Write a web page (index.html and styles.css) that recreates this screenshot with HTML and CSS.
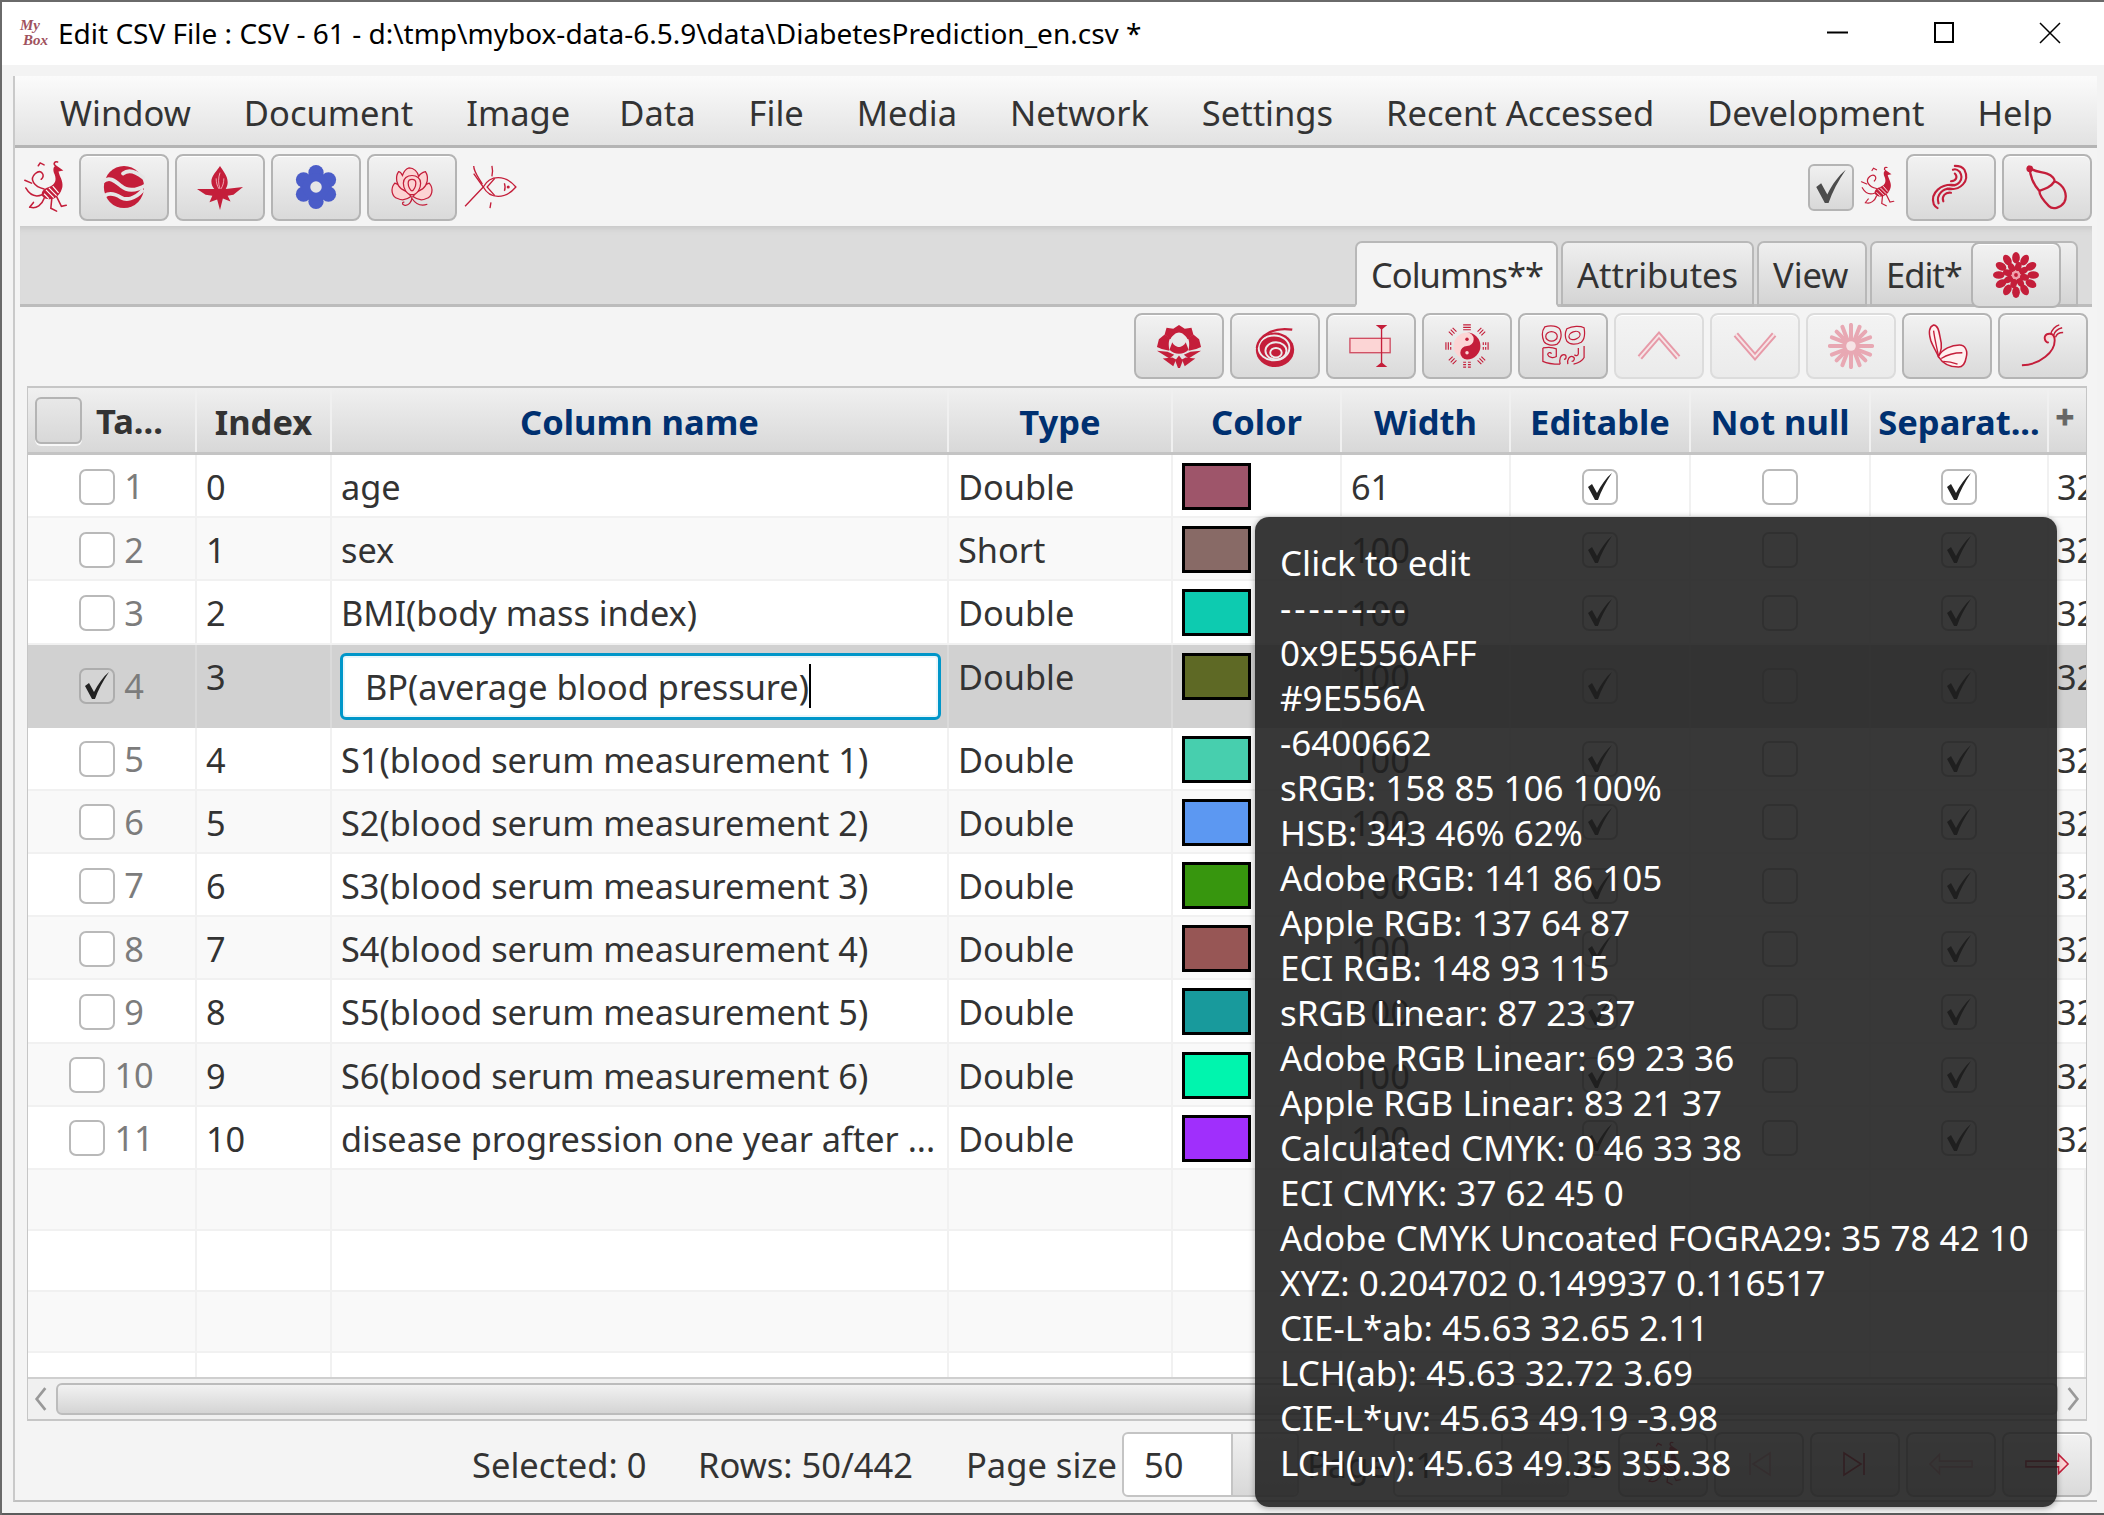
FILE: index.html
```html
<!DOCTYPE html>
<html lang="en">
<head>
    <meta charset="UTF-8">
    <title>Edit CSV File</title>
    <link rel="stylesheet" href="styles.css">
</head>
<body>

    <!-- Icon sprite -->
    <svg class="sprite" xmlns="http://www.w3.org/2000/svg">
        <symbol id="i-phoenix" viewBox="0 0 48 56">
            <g fill="none" stroke="#c41e3a" stroke-width="1.6" stroke-linecap="round">
                <path d="M22 30C12 28 6 20 13 14c6-5 11 2 6 6"/>
                <path d="M20 36c-7 3-13 0-17-7"/>
                <path d="M22 40c-2 6-8 11-14 9"/>
                <path d="M9 24 2 21"/>
                <path d="M30 40l-1 10 6 3"/>
                <path d="M35 38l5 10 5-1"/>
                <path d="M34 6c-3-2-1-5 2-4"/>
                <path d="M16 6l2-3 4 2"/>
                <path d="M11 44l-4 5"/>
            </g>
            <path fill="#c41e3a" d="M35 6c-4 0-4 5-2 9 2 6 1 10-6 13-8 2-10 9-4 12 9 3 16-3 18-12 1-6-3-11-4-16l5-1z"/>
            <g fill="none" stroke="#fff" stroke-width="1.2">
                <path d="M24 31l8 8"/>
                <path d="M27 29l8 8"/>
                <path d="M31 27l6 7"/>
                <path d="M22 35l5 5"/>
            </g>
        </symbol>
        <symbol id="i-swirl" viewBox="0 0 48 48">
            <ellipse cx="24" cy="24" rx="21" ry="22" fill="#c41e3a"/>
            <g fill="none" stroke="#e6e6e6" stroke-width="4" stroke-linecap="round">
                <path d="M1 19C9 12 15 18 21 23s14 6 26-1"/>
                <path d="M4 33c6-4 12-1 17 2s14 2 22-7"/>
                <path d="M23 10c5-4 12-3 21 4"/>
            </g>
        </symbol>
        <symbol id="i-flame" viewBox="0 0 48 48">
            <path fill="#c41e3a" d="M24 2c3 5 8 10 8 17 0 3-1 5-2 7l18-2-10 8-6 1 3 6-8-3-3 12-3-11-8 3 3-7-7-1L0 26l18 0c-2-2-3-5-3-8 0-6 6-11 9-16z"/>
            <path fill="none" stroke="#f4a8b4" stroke-width="1" d="M24 9c-2 6-2 11 0 17M20 15c0 4 1 8 3 11M28 15c0 4-1 8-3 11"/>
        </symbol>
        <symbol id="i-gear" viewBox="0 0 48 48">
            <g fill="#4a5cc8">
                <circle cx="24" cy="9" r="8"/>
                <circle cx="24" cy="39" r="8"/>
                <circle cx="11" cy="16.500" r="8"/>
                <circle cx="37" cy="16.500" r="8"/>
                <circle cx="11" cy="31.500" r="8"/>
                <circle cx="37" cy="31.500" r="8"/>
                <circle cx="24" cy="24" r="14"/>
            </g>
            <circle cx="24" cy="24" r="6" fill="#e6e6e6"/>
        </symbol>
        <symbol id="i-peony" viewBox="0 0 48 48">
            <g fill="#fcd3d3" stroke="#c41e3a" stroke-width="1.3">
                <path d="M6 20c-5 6-3 14 3 16 6 3 10 1 14-2-4-6-10-12-17-14z"/>
                <path d="M42 20c5 6 3 14-3 16-6 3-10 1-14-2 4-6 10-12 17-14z"/>
                <path d="M10 8c-4 6-2 14 3 18l11 6 11-6c5-4 7-12 3-18-4 1-6 3-7 5-1-5-5-9-10-9-4 1-6 5-7 8-1-2-3-4-4-4z"/>
                <path d="M15 20c0-5 4-8 9-8s9 3 9 8-3 12-9 12-9-7-9-12z"/>
                <path d="M20 20c0-3 2-4 4-4s4 1 4 4-2 8-4 8-4-5-4-8z"/>
            </g>
            <path fill="none" stroke="#c41e3a" stroke-width="1.3" d="M24 34c0 6-4 10-8 9-3-1-2-4 0-3M24 36c4 6 10 8 16 6"/>
        </symbol>
        <symbol id="i-fish" viewBox="0 0 56 48">
            <g fill="none" stroke="#c41e3a" stroke-width="1.4">
                <path d="M21 24C28 11 44 11 55 24 44 37 28 37 21 24z"/>
                <path d="M33 15l-8 9 8 9"/>
                <path d="M21 24 11 10M21 24 2 44"/>
                <path d="M11 2c0 6 5 12 9 19M29 40l-1 6M30 2c1 4 1 7 0 11"/>
                <path d="M43 20c1 3 1 6 0 8"/>
            </g>
            <circle cx="47" cy="24" r="1.6" fill="#c41e3a"/>
        </symbol>
        <symbol id="i-feather" viewBox="0 0 48 48">
            <g fill="none" stroke="#c41e3a" stroke-width="2.200" stroke-linecap="round">
                <path d="M20 26C34 28 44 18 38 6 36 3 32 2 28 2"/>
                <path d="M22 22C32 24 38 16 33 8c-2-2-5-3-7-2"/>
                <path d="M24 18c6 0 7-5 4-8"/>
                <path d="M28 22C14 20 2 30 6 42c1 2 2 3 4 4"/>
                <path d="M26 26C16 24 8 32 11 41"/>
                <path d="M24 30c-6-1-10 4-8 9"/>
            </g>
        </symbol>
        <symbol id="i-gourd" viewBox="0 0 48 48">
            <g fill="none" stroke="#c41e3a" stroke-width="2.400">
                <path d="M6 4c4 4 12 4 18 6 6 2 8 6 8 8 10 4 14 14 10 22-4 6-12 8-16 4-6-6-10-12-10-16C10 22 6 12 6 4z"/>
                <path d="M16 28c6-2 12-4 16-10"/>
            </g>
            <circle cx="6" cy="5" r="3.500" fill="#c41e3a"/>
        </symbol>
        <symbol id="i-chrys" viewBox="0 0 48 48">
            <g fill="#c41e3a">
                <ellipse cx="24" cy="6" rx="4" ry="6"/>
                <ellipse cx="24" cy="6" rx="4" ry="6" transform="rotate(30 24 24)"/>
                <ellipse cx="24" cy="6" rx="4" ry="6" transform="rotate(60 24 24)"/>
                <ellipse cx="24" cy="6" rx="4" ry="6" transform="rotate(90 24 24)"/>
                <ellipse cx="24" cy="6" rx="4" ry="6" transform="rotate(120 24 24)"/>
                <ellipse cx="24" cy="6" rx="4" ry="6" transform="rotate(150 24 24)"/>
                <ellipse cx="24" cy="6" rx="4" ry="6" transform="rotate(180 24 24)"/>
                <ellipse cx="24" cy="6" rx="4" ry="6" transform="rotate(210 24 24)"/>
                <ellipse cx="24" cy="6" rx="4" ry="6" transform="rotate(240 24 24)"/>
                <ellipse cx="24" cy="6" rx="4" ry="6" transform="rotate(270 24 24)"/>
                <ellipse cx="24" cy="6" rx="4" ry="6" transform="rotate(300 24 24)"/>
                <ellipse cx="24" cy="6" rx="4" ry="6" transform="rotate(330 24 24)"/>
                <ellipse cx="24" cy="15" rx="3.4" ry="5" transform="rotate(15 24 24)"/>
                <ellipse cx="24" cy="15" rx="3.4" ry="5" transform="rotate(60 24 24)"/>
                <ellipse cx="24" cy="15" rx="3.4" ry="5" transform="rotate(105 24 24)"/>
                <ellipse cx="24" cy="15" rx="3.4" ry="5" transform="rotate(150 24 24)"/>
                <ellipse cx="24" cy="15" rx="3.4" ry="5" transform="rotate(195 24 24)"/>
                <ellipse cx="24" cy="15" rx="3.4" ry="5" transform="rotate(240 24 24)"/>
                <ellipse cx="24" cy="15" rx="3.4" ry="5" transform="rotate(285 24 24)"/>
                <ellipse cx="24" cy="15" rx="3.4" ry="5" transform="rotate(330 24 24)"/>
            </g>
            <circle cx="24" cy="24" r="4.5" fill="#f0a0ac"/>
            <circle cx="24" cy="24" r="2" fill="#c41e3a"/>
        </symbol>
        <symbol id="i-lotus" viewBox="0 0 48 48">
            <g fill="#c41e3a">
                <path d="M24 2l-6 4-7-1-2 7 6 5c2-4 6-7 9-7s7 3 9 7l6-5-2-7-7 1z"/>
                <path d="M9 12l-6 5-2 8 5 2 8 2c-1-6-1-11 1-13z"/>
                <path d="M39 12l6 5 2 8-5 2-8 2c1-6 1-11-1-13z"/>
                <path d="M17 20c1 3 5 5 7 5s6-2 7-5l3 8c-3 3-6 4-10 4s-7-1-10-4z"/>
                <path d="M1 29l11 1 7 3-5 4z"/>
                <path d="M47 29l-11 1-7 3 5 4z"/>
                <path d="M7 37l10-1 4 2-3 7z"/>
                <path d="M41 37l-10-1-4 2 3 7z"/>
                <path d="M24 34l4 5-3 8h-2l-3-8z"/>
            </g>
        </symbol>
        <symbol id="i-spiral" viewBox="0 0 48 48">
            <ellipse cx="24" cy="28" rx="20" ry="18" fill="#c41e3a"/>
            <g fill="none" stroke="#ececec" stroke-width="2">
                <ellipse cx="23" cy="26" rx="16" ry="13"/>
                <ellipse cx="25" cy="29" rx="11" ry="9"/>
                <ellipse cx="25" cy="31" rx="6" ry="5"/>
            </g>
            <path fill="none" stroke="#c41e3a" stroke-width="2.4" d="M5 26C7 12 24 4 42 7"/>
        </symbol>
        <symbol id="i-bar" viewBox="0 0 48 48">
            <rect x="2" y="16" width="42" height="15" fill="#fcd5d5" stroke="#c41e3a" stroke-width="1.4" stroke-opacity=".75"/>
            <path fill="none" stroke="#c41e3a" stroke-width="1.4" d="M35 3v42"/>
            <path fill="#c41e3a" d="M29 2h12l-6 5zM29 46h12l-6-5z"/>
        </symbol>
        <symbol id="i-yinyang" viewBox="0 0 48 48">
            <circle cx="24" cy="24" r="14" fill="#fcd5d5"/>
            <path fill="#c41e3a" d="M24 10a14 14 0 0 1 0 28 7 7 0 0 1 0-14 7 7 0 0 0 0-14z"/>
            <circle cx="24" cy="17" r="1.8" fill="#c41e3a"/>
            <circle cx="24" cy="31" r="1.8" fill="#fcd5d5"/>
            <g stroke="#c41e3a" stroke-width="1.2" fill="none">
                <path d="M20 2h8M20 4.500h8M20 7h8"/>
                <path d="M20 41h3M25 41h3M20 43.500h3M25 43.500h3M20 46h3M25 46h3"/>
                <path d="M2 20v8M4.500 20v8M7 20v3M7 25v3"/>
                <path d="M41 20v3M41 25v3M43.500 20v3M43.500 25v3M46 20v8"/>
                <path d="M9 5l4 4M7 7l4 4M5 9l4 4"/>
                <path d="M39 5l-4 4M41 7l-4 4M43 9l-4 4"/>
                <path d="M9 43l4-4M7 41l4-4M5 39l4-4"/>
                <path d="M39 43l-4-4M41 41l-4-4M43 39l-4-4"/>
            </g>
        </symbol>
        <symbol id="i-mask" viewBox="0 0 48 48">
            <g fill="none" stroke="#c41e3a" stroke-width="1.3">
                <path d="M5 4c6-2 14-1 16 3 2 5 1 12-3 15-5 2-12 1-14-3C2 14 2 8 5 4z"/>
                <ellipse cx="12" cy="14" rx="6" ry="5"/>
                <path d="M28 6c6-3 14-3 18-1 1 6 1 12-3 15-5 3-12 3-15-1-2-4-2-9 0-13z"/>
                <ellipse cx="36" cy="13" rx="6" ry="4" transform="rotate(-20 36 13)"/>
                <path d="M3 26c5-1 10-1 14 1v8c-3 2-8 1-9-2 0-2 3-3 4-1M3 26v14c6 3 12 3 18 3"/>
                <path d="M21 43c-1-5 0-10 4-10 3 0 3 5 0 5"/>
                <path d="M29 43c-1-5 2-9 5-8 3 1 2 5-1 5"/>
                <path d="M46 24v12c-2 4-7 6-11 7M40 26v6c0 2-3 3-4 1"/>
            </g>
        </symbol>
        <symbol id="i-up" viewBox="0 0 48 48">
            <path fill="none" stroke="#e79aa8" stroke-width="6" d="M4 36 24 13l20 23"/>
            <path fill="none" stroke="#f6e4e6" stroke-width="2" d="M4 36 24 13l20 23"/>
        </symbol>
        <symbol id="i-down" viewBox="0 0 48 48">
            <path fill="none" stroke="#e79aa8" stroke-width="6" d="M4 12l20 23 20-23"/>
            <path fill="none" stroke="#f6e4e6" stroke-width="2" d="M4 12l20 23 20-23"/>
        </symbol>
        <symbol id="i-daisy" viewBox="0 0 48 48">
            <g stroke="#e8a8b3" stroke-width="4.200" stroke-linecap="round">
                <path d="M24 2v15M24 31v15M2 24h15M31 24h15"/>
                <path d="M9 9l10 10M29 29l10 10M39 9 29 19M19 29 9 39"/>
                <path d="M15 4l5 13M28 31l5 13M33 4l-5 13M20 31l-5 13"/>
                <path d="M4 15l13 5M31 28l13 5M44 15l-13 5M17 28 4 33"/>
            </g>
            <circle cx="24" cy="24" r="9" fill="#e8a8b3"/>
            <circle cx="24" cy="24" r="5" fill="#f6e4e6"/>
        </symbol>
        <symbol id="i-leaf" viewBox="0 0 48 48">
            <g fill="#fff0f0" stroke="#c41e3a" stroke-width="1.6">
                <path d="M10 2C5 4 5 11 7 18c2 6 6 12 8 17 3-5 4-12 2-19C16 10 15 2 10 2z"/>
                <path d="M15 35c4-8 14-12 22-12 6 0 9 6 7 13-1 6-4 10-8 10-8 0-16-3-21-11z"/>
            </g>
            <path fill="none" stroke="#c41e3a" stroke-width="1.4" d="M10 8c1 8 3 16 5 26M18 37c6-4 14-6 22-6M20 40c5 0 10 1 15 3"/>
        </symbol>
        <symbol id="i-curl" viewBox="0 0 48 48">
            <path fill="none" stroke="#fcd5d5" stroke-width="5" d="M36 14c-5-3-10 0-9 5"/>
            <path fill="none" stroke="#c41e3a" stroke-width="2" d="M2 44c18 0 36-14 34-28-1-6-8-6-10-2-1 4 2 7 4 6"/>
            <g fill="none" stroke="#c41e3a" stroke-width="1.500">
                <path d="M32 12c1-5 5-9 9-10"/>
                <path d="M35 13c1-4 5-7 9-8"/>
                <path d="M37 15c1-3 4-5 8-5"/>
            </g>
        </symbol>
        <symbol id="i-first" viewBox="0 0 26 26">
            <path fill="none" stroke="#c41e3a" stroke-width="1.600" d="M4 2v22M24 2 7 13l17 11z"/>
        </symbol>
        <symbol id="i-last" viewBox="0 0 26 26">
            <path fill="none" stroke="#c41e3a" stroke-width="1.600" d="M22 2v22M2 2l17 11L2 24z"/>
        </symbol>
        <symbol id="i-left" viewBox="0 0 48 48">
            <path fill="#fcd5d5" stroke="#c41e3a" stroke-width="1.600" d="M2 24l10-10v7h34v6H12v7z"/>
        </symbol>
        <symbol id="i-right" viewBox="0 0 48 48">
            <path fill="#fcd5d5" stroke="#c41e3a" stroke-width="1.600" d="M46 24 36 14v7H2v6h34v7z"/>
        </symbol>
        <symbol id="i-check" viewBox="0 0 26 28">
            <path fill="currentColor" d="M1 14l4-3 5 9C14 12 19 5 25 0 19 9 14 18 11 27H8z"/>
        </symbol>
    </svg>

    <!-- Title bar -->
    <div class="titlebar">
        <div class="appicon"><span>My</span><span class="box-word">Box</span></div>
        <span class="title">Edit CSV File : CSV - 61 - d:\tmp\mybox-data-6.5.9\data\DiabetesPrediction_en.csv *</span>
        <div class="winbtns">
            <svg class="winbtn" viewBox="0 0 22 22"><path d="M0 10.500h21" stroke="#000" stroke-width="2"/></svg>
            <svg class="winbtn" viewBox="0 0 22 22"><rect x="2" y="1" width="18" height="19" fill="none" stroke="#000" stroke-width="2"/></svg>
            <svg class="winbtn" viewBox="0 0 22 22"><path d="M1 1l20 20M21 1 1 21" stroke="#000" stroke-width="1.500"/></svg>
        </div>
    </div>

    <div class="pane">

        <!-- Menu -->
        <div class="menubar">
            <span>Window</span>
            <span>Document</span>
            <span>Image</span>
            <span class="menu-data">Data</span>
            <span>File</span>
            <span>Media</span>
            <span>Network</span>
            <span>Settings</span>
            <span>Recent Accessed</span>
            <span>Development</span>
            <span>Help</span>
        </div>

        <!-- Main toolbar -->
        <div class="toolbar">
            <svg class="ico phoenix"><use href="#i-phoenix"/></svg>
            <button class="btn"><svg class="ico"><use href="#i-swirl"/></svg></button>
            <button class="btn"><svg class="ico"><use href="#i-flame"/></svg></button>
            <button class="btn"><svg class="ico"><use href="#i-gear"/></svg></button>
            <button class="btn"><svg class="ico"><use href="#i-peony"/></svg></button>
            <svg class="ico fish"><use href="#i-fish"/></svg>
            <div class="spacer"></div>
            <div class="bigcheck"><svg class="tick"><use href="#i-check"/></svg></div>
            <svg class="ico phoenix-small"><use href="#i-phoenix"/></svg>
            <button class="btn"><svg class="ico"><use href="#i-feather"/></svg></button>
            <button class="btn"><svg class="ico"><use href="#i-gourd"/></svg></button>
        </div>

        <!-- Tabs -->
        <div class="tabs">
            <div class="tab tab-columns active">Columns**</div>
            <div class="tab tab-attrs">Attributes</div>
            <div class="tab tab-view">View</div>
            <div class="tab tab-edit">Edit*
                <button class="btn tabbtn"><svg class="ico"><use href="#i-chrys"/></svg></button>
            </div>
        </div>

        <!-- Column tools -->
        <div class="tools">
            <button class="btn"><svg class="ico"><use href="#i-lotus"/></svg></button>
            <button class="btn"><svg class="ico"><use href="#i-spiral"/></svg></button>
            <button class="btn"><svg class="ico"><use href="#i-bar"/></svg></button>
            <button class="btn"><svg class="ico"><use href="#i-yinyang"/></svg></button>
            <button class="btn"><svg class="ico"><use href="#i-mask"/></svg></button>
            <button class="btn disabled"><svg class="ico"><use href="#i-up"/></svg></button>
            <button class="btn disabled"><svg class="ico"><use href="#i-down"/></svg></button>
            <button class="btn disabled"><svg class="ico"><use href="#i-daisy"/></svg></button>
            <button class="btn"><svg class="ico"><use href="#i-leaf"/></svg></button>
            <button class="btn"><svg class="ico"><use href="#i-curl"/></svg></button>
        </div>

        <!-- Table -->
        <div class="table">
            <div class="row head">
                <div class="hc hc-tag"><span class="headbox"></span><span>Ta...</span></div>
                <div class="hc dark">Index</div>
                <div class="hc">Column name</div>
                <div class="hc">Type</div>
                <div class="hc">Color</div>
                <div class="hc">Width</div>
                <div class="hc">Editable</div>
                <div class="hc">Not null</div>
                <div class="hc">Separat...</div>
                <div class="hc plus">+</div>
            </div>
            <div class="rows">
                <div class="row">
                    <div class="c tag"><span class="box"></span><span class="num">1</span></div>
                    <div class="c">0</div>
                    <div class="c">age</div>
                    <div class="c">Double</div>
                    <div class="c"><span class="swatch" style="background:#9e556a"></span></div>
                    <div class="c">61</div>
                    <div class="c center"><span class="box"><svg class="mark"><use href="#i-check"/></svg></span></div>
                    <div class="c center"><span class="box"></span></div>
                    <div class="c center"><span class="box"><svg class="mark"><use href="#i-check"/></svg></span></div>
                    <div class="c clip">32</div>
                </div>
                <div class="row alt">
                    <div class="c tag"><span class="box"></span><span class="num">2</span></div>
                    <div class="c">1</div>
                    <div class="c">sex</div>
                    <div class="c">Short</div>
                    <div class="c"><span class="swatch" style="background:#886a66"></span></div>
                    <div class="c">100</div>
                    <div class="c center"><span class="box"><svg class="mark"><use href="#i-check"/></svg></span></div>
                    <div class="c center"><span class="box"></span></div>
                    <div class="c center"><span class="box"><svg class="mark"><use href="#i-check"/></svg></span></div>
                    <div class="c clip">32</div>
                </div>
                <div class="row">
                    <div class="c tag"><span class="box"></span><span class="num">3</span></div>
                    <div class="c">2</div>
                    <div class="c">BMI(body mass index)</div>
                    <div class="c">Double</div>
                    <div class="c"><span class="swatch" style="background:#0dcbb0"></span></div>
                    <div class="c">100</div>
                    <div class="c center"><span class="box"><svg class="mark"><use href="#i-check"/></svg></span></div>
                    <div class="c center"><span class="box"></span></div>
                    <div class="c center"><span class="box"><svg class="mark"><use href="#i-check"/></svg></span></div>
                    <div class="c clip">32</div>
                </div>
                <div class="row selected">
                    <div class="c tag"><span class="box"><svg class="mark"><use href="#i-check"/></svg></span><span class="num">4</span></div>
                    <div class="c">3</div>
                    <div class="c editing"><div class="editor">BP(average blood pressure)<span class="caret"></span></div></div>
                    <div class="c">Double</div>
                    <div class="c"><span class="swatch" style="background:#5e6925"></span></div>
                    <div class="c">100</div>
                    <div class="c center"><span class="box"><svg class="mark"><use href="#i-check"/></svg></span></div>
                    <div class="c center"><span class="box"></span></div>
                    <div class="c center"><span class="box"><svg class="mark"><use href="#i-check"/></svg></span></div>
                    <div class="c clip">32</div>
                </div>
                <div class="row">
                    <div class="c tag"><span class="box"></span><span class="num">5</span></div>
                    <div class="c">4</div>
                    <div class="c">S1(blood serum measurement 1)</div>
                    <div class="c">Double</div>
                    <div class="c"><span class="swatch" style="background:#47cfae"></span></div>
                    <div class="c">100</div>
                    <div class="c center"><span class="box"><svg class="mark"><use href="#i-check"/></svg></span></div>
                    <div class="c center"><span class="box"></span></div>
                    <div class="c center"><span class="box"><svg class="mark"><use href="#i-check"/></svg></span></div>
                    <div class="c clip">32</div>
                </div>
                <div class="row alt">
                    <div class="c tag"><span class="box"></span><span class="num">6</span></div>
                    <div class="c">5</div>
                    <div class="c">S2(blood serum measurement 2)</div>
                    <div class="c">Double</div>
                    <div class="c"><span class="swatch" style="background:#5c98f2"></span></div>
                    <div class="c">100</div>
                    <div class="c center"><span class="box"><svg class="mark"><use href="#i-check"/></svg></span></div>
                    <div class="c center"><span class="box"></span></div>
                    <div class="c center"><span class="box"><svg class="mark"><use href="#i-check"/></svg></span></div>
                    <div class="c clip">32</div>
                </div>
                <div class="row">
                    <div class="c tag"><span class="box"></span><span class="num">7</span></div>
                    <div class="c">6</div>
                    <div class="c">S3(blood serum measurement 3)</div>
                    <div class="c">Double</div>
                    <div class="c"><span class="swatch" style="background:#37960e"></span></div>
                    <div class="c">100</div>
                    <div class="c center"><span class="box"><svg class="mark"><use href="#i-check"/></svg></span></div>
                    <div class="c center"><span class="box"></span></div>
                    <div class="c center"><span class="box"><svg class="mark"><use href="#i-check"/></svg></span></div>
                    <div class="c clip">32</div>
                </div>
                <div class="row alt">
                    <div class="c tag"><span class="box"></span><span class="num">8</span></div>
                    <div class="c">7</div>
                    <div class="c">S4(blood serum measurement 4)</div>
                    <div class="c">Double</div>
                    <div class="c"><span class="swatch" style="background:#975655"></span></div>
                    <div class="c">100</div>
                    <div class="c center"><span class="box"><svg class="mark"><use href="#i-check"/></svg></span></div>
                    <div class="c center"><span class="box"></span></div>
                    <div class="c center"><span class="box"><svg class="mark"><use href="#i-check"/></svg></span></div>
                    <div class="c clip">32</div>
                </div>
                <div class="row">
                    <div class="c tag"><span class="box"></span><span class="num">9</span></div>
                    <div class="c">8</div>
                    <div class="c">S5(blood serum measurement 5)</div>
                    <div class="c">Double</div>
                    <div class="c"><span class="swatch" style="background:#189a9c"></span></div>
                    <div class="c">100</div>
                    <div class="c center"><span class="box"><svg class="mark"><use href="#i-check"/></svg></span></div>
                    <div class="c center"><span class="box"></span></div>
                    <div class="c center"><span class="box"><svg class="mark"><use href="#i-check"/></svg></span></div>
                    <div class="c clip">32</div>
                </div>
                <div class="row alt">
                    <div class="c tag"><span class="box"></span><span class="num">10</span></div>
                    <div class="c">9</div>
                    <div class="c">S6(blood serum measurement 6)</div>
                    <div class="c">Double</div>
                    <div class="c"><span class="swatch" style="background:#00f5ae"></span></div>
                    <div class="c">100</div>
                    <div class="c center"><span class="box"><svg class="mark"><use href="#i-check"/></svg></span></div>
                    <div class="c center"><span class="box"></span></div>
                    <div class="c center"><span class="box"><svg class="mark"><use href="#i-check"/></svg></span></div>
                    <div class="c clip">32</div>
                </div>
                <div class="row">
                    <div class="c tag"><span class="box"></span><span class="num">11</span></div>
                    <div class="c">10</div>
                    <div class="c">disease progression one year after ...</div>
                    <div class="c">Double</div>
                    <div class="c"><span class="swatch" style="background:#a02ffc"></span></div>
                    <div class="c">100</div>
                    <div class="c center"><span class="box"><svg class="mark"><use href="#i-check"/></svg></span></div>
                    <div class="c center"><span class="box"></span></div>
                    <div class="c center"><span class="box"><svg class="mark"><use href="#i-check"/></svg></span></div>
                    <div class="c clip">32</div>
                </div>
                <div class="row empty alt"><div class="c"></div><div class="c"></div><div class="c"></div><div class="c"></div><div class="c"></div><div class="c"></div><div class="c"></div><div class="c"></div><div class="c"></div><div class="c"></div></div>
                <div class="row empty"><div class="c"></div><div class="c"></div><div class="c"></div><div class="c"></div><div class="c"></div><div class="c"></div><div class="c"></div><div class="c"></div><div class="c"></div><div class="c"></div></div>
                <div class="row empty alt"><div class="c"></div><div class="c"></div><div class="c"></div><div class="c"></div><div class="c"></div><div class="c"></div><div class="c"></div><div class="c"></div><div class="c"></div><div class="c"></div></div>
                <div class="row empty"><div class="c"></div><div class="c"></div><div class="c"></div><div class="c"></div><div class="c"></div><div class="c"></div><div class="c"></div><div class="c"></div><div class="c"></div><div class="c"></div></div>
            </div>
            <div class="hscroll">
                <svg class="arrow" viewBox="0 0 12 24"><path d="M10 2 2 12l8 10" fill="none" stroke="#999" stroke-width="2.500"/></svg>
                <div class="thumb"></div>
                <svg class="arrow" viewBox="0 0 12 24"><path d="M2 2l8 10-8 10" fill="none" stroke="#999" stroke-width="2.500"/></svg>
            </div>
        </div>

        <!-- Pagination -->
        <div class="footer">
            <span class="lbl lbl-sel">Selected: 0</span>
            <span class="lbl lbl-rows">Rows: 50/442</span>
            <span class="lbl lbl-size">Page size</span>
            <div class="combo combo-size"><span class="val">50</span><span class="drop"></span></div>
            <span class="lbl lbl-page">Page</span>
            <div class="combo combo-page"><span class="val">1</span><span class="drop"></span></div>
            <span class="lbl lbl-total">/9</span>
            <button class="btn"><svg class="ico"><use href="#i-phoenix"/></svg></button>
            <button class="btn"><svg class="ico nav faded"><use href="#i-first"/></svg></button>
            <button class="btn"><svg class="ico nav"><use href="#i-last"/></svg></button>
            <button class="btn"><svg class="ico faded"><use href="#i-left"/></svg></button>
            <button class="btn"><svg class="ico"><use href="#i-right"/></svg></button>
        </div>
    </div>

    <div class="bottomedge"></div>

    <!-- Tooltip over the table -->
    <div class="tooltip">
        <div>Click to edit</div>
        <div class="dashes">---------</div>
        <div>0x9E556AFF</div>
        <div>#9E556A</div>
        <div>-6400662</div>
        <div>sRGB: 158 85 106 100%</div>
        <div>HSB: 343 46% 62%</div>
        <div>Adobe RGB: 141 86 105</div>
        <div>Apple RGB: 137 64 87</div>
        <div>ECI RGB: 148 93 115</div>
        <div>sRGB Linear: 87 23 37</div>
        <div>Adobe RGB Linear: 69 23 36</div>
        <div>Apple RGB Linear: 83 21 37</div>
        <div>Calculated CMYK: 0 46 33 38</div>
        <div>ECI CMYK: 37 62 45 0</div>
        <div>Adobe CMYK Uncoated FOGRA29: 35 78 42 10</div>
        <div>XYZ: 0.204702 0.149937 0.116517</div>
        <div>CIE-L*ab: 45.63 32.65 2.11</div>
        <div>LCH(ab): 45.63 32.72 3.69</div>
        <div>CIE-L*uv: 45.63 49.19 -3.98</div>
        <div>LCH(uv): 45.63 49.35 355.38</div>
    </div>

</body>
</html>
```
FILE: styles.css
```css
* {
    box-sizing: border-box;
}

html, body {
    margin: 0;
    height: 100%;
}

body {
    width: 2104px;
    height: 1515px;
    overflow: hidden;
    position: relative;
    display: flex;
    flex-direction: column;
    font-family: "Noto Sans", sans-serif;
    color: #333;
    background-color: #f3f3f3;
    border-left: 2px solid #6a6a6a;
}

.sprite {
    display: none;
}

/* Title bar */
.titlebar {
    height: 65px;
    flex: none;
    display: flex;
    align-items: center;
    padding: 0 0 2px 18px;
    background-color: #fff;
    border-top: 2px solid #6a6a6a;
    color: #000;
}

.appicon {
    width: 38px;
    height: 32px;
    margin-top: 3px;
    display: flex;
    flex-direction: column;
    font-family: "Liberation Serif", serif;
    font-style: italic;
    font-weight: bold;
    font-size: 15px;
    line-height: 15px;
    color: #a0525e;
}

.appicon .box-word {
    margin-left: 3px;
}

.title {
    font-size: 28px;
    white-space: nowrap;
}

.winbtns {
    margin-left: auto;
    display: flex;
    gap: 84px;
    padding-right: 43px;
}

.winbtn {
    width: 22px;
    height: 22px;
}

/* Main pane */
.pane {
    flex: none;
    height: 1426px;
    margin: 11px 7px 0 11px;
    display: flex;
    flex-direction: column;
    border-left: 2px solid #c9c9c9;
    border-bottom: 2px solid #c0c0c0;
    background-color: #f4f4f4;
}

.menubar {
    height: 72px;
    flex: none;
    display: flex;
    align-items: center;
    gap: 53px;
    padding: 3px 0 0 45px;
    font-size: 34.5px;
    white-space: nowrap;
    background: linear-gradient(#fbfbfb, #e2e2e2);
    border-bottom: 3px solid #b4b4b4;
}

.menu-data {
    margin-left: -4px;
}

.toolbar {
    height: 78px;
    flex: none;
    display: flex;
    align-items: center;
    gap: 6px;
    padding: 0 5px 0 7px;
}

.spacer {
    flex: 1;
}

.btn {
    width: 90px;
    height: 67px;
    flex: none;
    padding: 0;
    display: flex;
    align-items: center;
    justify-content: center;
    background: linear-gradient(#f2f2f2, #dadada);
    border: 2px solid #b4b4b4;
    border-radius: 8px;
    box-shadow: inset 0 1px 0 #fff;
}

.btn.disabled {
    background: linear-gradient(#f3f3f3, #ebebeb);
    border-color: #dcdcdc;
}

.ico {
    width: 46px;
    height: 46px;
}

.ico.nav {
    width: 26px;
    height: 26px;
}

.ico.faded {
    opacity: 0.35;
}

.phoenix {
    width: 48px;
    height: 54px;
    margin-right: 3px;
}

.fish {
    width: 54px;
    height: 46px;
}

.bigcheck {
    width: 46px;
    height: 47px;
    display: flex;
    align-items: center;
    justify-content: center;
    background: linear-gradient(#f0f0f0, #d8d8d8);
    border: 2px solid #b4b4b4;
    border-radius: 6px;
}

.tick {
    width: 32px;
    height: 36px;
    color: #4c4c4c;
}

.phoenix-small {
    width: 36px;
    height: 46px;
    margin-right: 4px;
}

/* Tabs */
.tabs {
    height: 81px;
    flex: none;
    display: flex;
    align-items: flex-end;
    justify-content: flex-end;
    gap: 3px;
    margin: 0 5px 0 5px;
    padding-right: 14px;
    background-color: #dcdcdc;
    border-bottom: 3px solid #bcbcbc;
    box-shadow: inset 0 8px 6px -6px #c4c4c4;
}

.tab {
    height: 66px;
    margin-bottom: -3px;
    display: flex;
    align-items: center;
    padding: 2px 0 0 14px;
    font-size: 34.5px;
    white-space: nowrap;
    background: linear-gradient(#efefef, #d4d4d4);
    border: 2px solid #b8b8b8;
    border-bottom-width: 3px;
    border-radius: 7px 7px 0 0;
    overflow: hidden;
}

.tab.active {
    background: #f4f4f4;
    border-bottom-color: #f4f4f4;
}

.tab-columns {
    width: 203px;
    letter-spacing: -1px;
}

.tab-attrs {
    width: 193px;
}

.tab-view {
    width: 110px;
}

.tab-edit {
    width: 208px;
    overflow: visible;
    letter-spacing: -1px;
}

.tabbtn {
    margin-left: auto;
    margin-right: 15px;
    height: 66px;
}

/* Column tools */
.tools {
    height: 79px;
    flex: none;
    display: flex;
    justify-content: flex-end;
    gap: 6px;
    padding: 6px 9px 0 0;
}

.tools .btn {
    height: 66px;
}

/* Table */
.table {
    height: 1035px;
    flex: none;
    display: flex;
    flex-direction: column;
    margin: 0 10px 0 12px;
    background-color: #fff;
    border-top: 2px solid #c6c6c6;
    border-bottom: 2px solid #c6c6c6;
    border-left: 1px solid #c6c6c6;
    border-right: 1px solid #c6c6c6;
    overflow: hidden;
}

.row {
    display: grid;
    grid-template-columns: 169px 135px 617px 224px 169px 169px 180px 180px 178px 37px;
    height: 63.2px;
    flex: none;
    font-size: 34.3px;
    background-color: #fff;
}

.row.alt {
    background-color: #f9f9f9;
}

.row.selected {
    height: 83px;
    background-color: #d1d1d1;
}

.row.empty {
    height: 61px;
}

.rows {
    flex: 1;
    overflow: hidden;
}

.head {
    height: 67px;
    font-size: 34.5px;
    font-weight: bold;
    color: #003070;
    background: linear-gradient(#f0f0f0, #d8d8d8);
    border-bottom: 3px solid #c4c4c4;
}

.hc {
    display: flex;
    align-items: center;
    justify-content: center;
    padding-top: 2px;
    white-space: nowrap;
    border-right: 2px solid #f0f0f0;
    overflow: hidden;
}

.hc.dark {
    color: #333;
}

.hc-tag {
    justify-content: flex-start;
    gap: 14px;
    padding: 0 0 0 7px;
    color: #333;
}

.headbox {
    width: 47px;
    height: 47px;
    background: linear-gradient(#e8e8e8, #d8d8d8);
    border: 2px solid #b4b4b4;
    border-radius: 6px;
    box-shadow: 0 2px 0 #f8f8f8;
}

.plus {
    color: #666;
    font-size: 32px;
    padding: 0 5px 8px 0;
    border-right: none;
    -webkit-text-stroke: 1px #666;
}

.c {
    display: flex;
    align-items: center;
    padding: 2px 9px 0;
    white-space: nowrap;
    overflow: hidden;
    border-right: 2px solid #f1f1f1;
    border-bottom: 2px solid #f1f1f1;
}

.selected .c {
    align-items: flex-start;
    padding-top: 8px;
    border-bottom: none;
    border-right-color: #dadada;
}

.c.tag {
    justify-content: center;
    gap: 9px;
}

.selected .c.center,
.selected .c.tag {
    align-items: center;
    padding-top: 0;
}

.c.center {
    justify-content: center;
}

.c.clip {
    padding-left: 8px;
    border-right: none;
    overflow: hidden;
}

.box {
    width: 36px;
    height: 36px;
    flex: none;
    display: flex;
    align-items: center;
    justify-content: center;
    background-color: #fff;
    border: 2px solid #b9b9b9;
    border-radius: 7px;
}

.selected .box {
    background: #d4d4d4;
    border-color: #adadad;
}

.mark {
    width: 26px;
    height: 28px;
    color: #222;
}

.num {
    color: #7c7c7c;
    line-height: 1;
}

.swatch {
    width: 69px;
    height: 47px;
    border: 3px solid #000;
}

.selected .c.editing {
    padding: 8px 6px 0 8px;
}

.editor {
    width: 100%;
    height: 67px;
    display: flex;
    align-items: center;
    padding-left: 22px;
    background-color: #fff;
    border: 3px solid #0096c9;
    border-radius: 6px;
    box-shadow: inset 0 0 0 2px #eaf6fb;
}

.caret {
    width: 2px;
    height: 44px;
    background-color: #000;
}

/* Horizontal scrollbar */
.hscroll {
    height: 42px;
    flex: none;
    display: flex;
    align-items: center;
    gap: 8px;
    padding: 0 6px;
    background-color: #f0f0f0;
    border-top: 2px solid #cfcfcf;
}

.arrow {
    width: 14px;
    height: 26px;
    flex: none;
}

.thumb {
    flex: 1;
    height: 32px;
    background: linear-gradient(#f2f2f2, #d4d4d4);
    border: 2px solid #bcbcbc;
    border-radius: 6px;
}

/* Pagination */
.footer {
    flex: 1;
    display: flex;
    align-items: center;
    gap: 6px;
    padding: 7px 0 0 0;
    font-size: 34.5px;
    white-space: nowrap;
}

.footer .btn {
    height: 65px;
}

.lbl-sel {
    margin-left: 457px;
    width: 220px;
}

.lbl-rows {
    width: 262px;
}

.lbl-size {
    width: 150px;
}

.lbl-page {
    width: 80px;
    margin-left: 2px;
}

.lbl-total {
    width: 37px;
}

.combo {
    height: 65px;
    display: flex;
    align-items: stretch;
    background-color: #fff;
    border: 2px solid #c4c4c4;
    border-radius: 6px;
    overflow: hidden;
}

.combo-size {
    width: 177px;
}

.combo-page {
    width: 176px;
}

.val {
    flex: 1;
    padding: 7px 0 0 20px;
}

.drop {
    width: 66px;
    flex: none;
    background: linear-gradient(#f0f0f0, #d8d8d8);
    border-left: 2px solid #c4c4c4;
}

.bottomedge {
    flex: none;
    height: 2px;
    margin-top: auto;
    background-color: #5c5c5c;
}

/* Tooltip */
.tooltip {
    position: absolute;
    left: 1253px;
    top: 517px;
    width: 802px;
    height: 990px;
    padding: 23px 0 0 25px;
    font-size: 35px;
    line-height: 45px;
    white-space: nowrap;
    color: #fff;
    background-color: rgba(32, 32, 32, 0.89);
    border-radius: 14px;
    box-shadow: 0 1px 6px rgba(0, 0, 0, 0.35);
}

.dashes {
    letter-spacing: 3px;
}
```
